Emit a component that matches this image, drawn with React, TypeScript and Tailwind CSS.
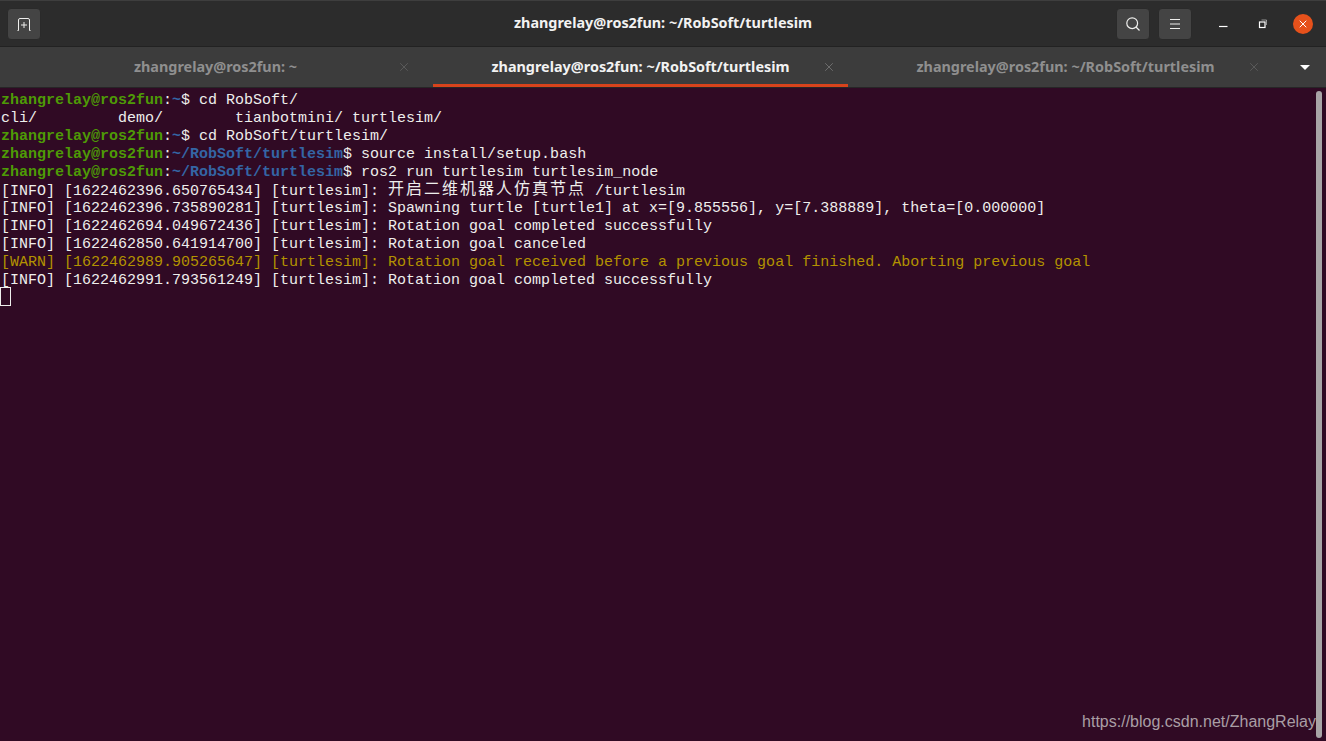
import type { ReactNode } from "react";
import { X } from "lucide-react";

const mono = "font-['Liberation_Mono','Noto_Sans_CJK_SC',monospace]";
const ui = "font-['Noto_Sans','Open_Sans',sans-serif]";

function HeaderButton({ children }: { children: ReactNode }) {
  return (
    <button
      type="button"
      className="flex h-8 w-[34px] items-center justify-center rounded-[4px] border border-[#2a2a2a] bg-[#444444] text-[#eeeeec]"
    >
      {children}
    </button>
  );
}

function Tab({ label, active }: { label: string; active?: boolean }) {
  return (
    <div className="relative grid h-full w-[425px] grid-cols-[1fr_auto_1fr] items-center">
      <span />
      <span className={`pb-[1px] text-[14.4px] font-bold ${active ? "text-[#f2f2f2]" : "text-[#8f8f8f]"}`}>{label}</span>
      <span className="flex justify-end pr-[17px]">
        <X size={14} strokeWidth={1.1} className={active ? "text-[#8a8a8a]" : "text-[#6a6a6a]"} />
      </span>
      {active && <div className="absolute right-[5px] bottom-0 left-[5px] h-[3px] bg-[#d8431c]" />}
    </div>
  );
}

function Prompt({ path, children }: { path: string; children: ReactNode }) {
  return (
    <div className="h-[18px] whitespace-pre">
      <span className="font-bold text-[#4e9a06]">zhangrelay@ros2fun</span>:
      <span className="font-bold text-[#3465a4]">{path}</span>$ {children}
    </div>
  );
}

function Line({ children, warn }: { children: ReactNode; warn?: boolean }) {
  return <div className={`h-[18px] whitespace-pre ${warn ? "text-[#b39200]" : ""}`}>{children}</div>;
}

export default function App() {
  return (
    <div className={`flex h-[741px] w-[1326px] flex-col overflow-hidden bg-[#300a24] ${ui}`}>
      {/* Title bar */}
      <header className="grid h-[47px] shrink-0 grid-cols-[1fr_auto_1fr] items-center border-t border-b border-t-[#3e3e3e] border-b-[#222222] bg-[#2c2c2c] px-[7px]">
        <div className="flex">
          <HeaderButton>
            <svg width="16" height="16" viewBox="0 0 16 16" fill="none" stroke="currentColor" strokeWidth="1">
              <path d="M1.5 14.5H2.5V4a1.5 1.5 0 0 1 1.5-1.5h8A1.5 1.5 0 0 1 13.5 4v10.5h1" />
              <path d="M8 6v6M5 9h6" />
            </svg>
          </HeaderButton>
        </div>
        <div className="pb-[1px] text-[14.4px] font-bold text-[#f2f2f2]">zhangrelay@ros2fun: ~/RobSoft/turtlesim</div>
        <div className="flex items-center justify-end">
          <div className="flex gap-2">
            <HeaderButton>
              <svg width="16" height="16" viewBox="0 0 16 16" fill="none" stroke="currentColor" strokeWidth="1.2">
                <circle cx="7.2" cy="7.2" r="5.4" />
                <path d="M11 11l3.5 3.5" />
              </svg>
            </HeaderButton>
            <HeaderButton>
              <svg width="12" height="12" viewBox="0 0 12 12" stroke="currentColor" strokeWidth="1">
                <path d="M1 1.5h10M1 6h10M1 10.5h10" />
              </svg>
            </HeaderButton>
          </div>
          <div className="ml-[11px] flex w-[40px] justify-center text-white">
            <svg width="10" height="10" viewBox="0 0 10 10" stroke="currentColor" strokeWidth="1.2">
              <path d="M1 7.5h8.5" />
            </svg>
          </div>
          <div className="flex w-[40px] justify-center text-white">
            <svg width="10" height="10" viewBox="0 0 10 10" fill="none" stroke="currentColor">
              <rect x="1.5" y="3" width="5.5" height="5.5" strokeWidth="1.2" />
              <path d="M3.5 1h5v5" strokeWidth="0.7" strokeOpacity="0.7" />
            </svg>
          </div>
          <div className="mr-[6px] ml-[10px] flex h-5 w-5 items-center justify-center rounded-full bg-[#e6511b] text-white">
            <X size={12} strokeWidth={2} />
          </div>
        </div>
      </header>

      {/* Tab strip */}
      <nav className="flex h-[41px] shrink-0 border-b border-[#262626] bg-[#3c3c3c] pl-[3px]">
        <Tab label="zhangrelay@ros2fun: ~" />
        <Tab active label="zhangrelay@ros2fun: ~/RobSoft/turtlesim" />
        <Tab label="zhangrelay@ros2fun: ~/RobSoft/turtlesim" />
        <div className="flex flex-1 items-center justify-center pl-[6px]">
          <div className="h-0 w-0 border-x-[5px] border-t-[5px] border-x-transparent border-t-white" />
        </div>
      </nav>

      {/* Terminal */}
      <main className="relative flex min-h-0 flex-1">
        <div className={`flex-1 pt-[4px] pl-[1px] text-[15px] leading-[18px] text-[#eeeeec] ${mono}`}>
          <Prompt path="~">cd RobSoft/</Prompt>
          <Line>{"cli/         demo/        tianbotmini/ turtlesim/"}</Line>
          <Prompt path="~">cd RobSoft/turtlesim/</Prompt>
          <Prompt path="~/RobSoft/turtlesim">source install/setup.bash</Prompt>
          <Prompt path="~/RobSoft/turtlesim">ros2 run turtlesim turtlesim_node</Prompt>
          <Line>
            {"[INFO] [1622462396.650765434] [turtlesim]: "}
            <span className="relative -top-[1px] text-[16px] tracking-[2px]">开启二维机器人仿真节点</span>
            {" /turtlesim"}
          </Line>
          <Line>{"[INFO] [1622462396.735890281] [turtlesim]: Spawning turtle [turtle1] at x=[9.855556], y=[7.388889], theta=[0.000000]"}</Line>
          <Line>{"[INFO] [1622462694.049672436] [turtlesim]: Rotation goal completed successfully"}</Line>
          <Line>{"[INFO] [1622462850.641914700] [turtlesim]: Rotation goal canceled"}</Line>
          <Line warn>{"[WARN] [1622462989.905265647] [turtlesim]: Rotation goal received before a previous goal finished. Aborting previous goal"}</Line>
          <Line>{"[INFO] [1622462991.793561249] [turtlesim]: Rotation goal completed successfully"}</Line>
          <div className="-mt-[3px] -ml-[1px] h-[19px] w-[11px] border border-[#eeeeec]" />
        </div>
        <div className="w-[11px] shrink-0 py-[3px] pr-[4px] pl-[1px]">
          <div className="h-full w-[6px] rounded-full bg-[#a8a4a6]" />
        </div>
        <div className="absolute right-[10px] bottom-[9px] font-['Liberation_Sans',sans-serif] text-[16px] leading-[20px] text-[#a99ea5]">
          https://blog.csdn.net/ZhangRelay
        </div>
      </main>
    </div>
  );
}
